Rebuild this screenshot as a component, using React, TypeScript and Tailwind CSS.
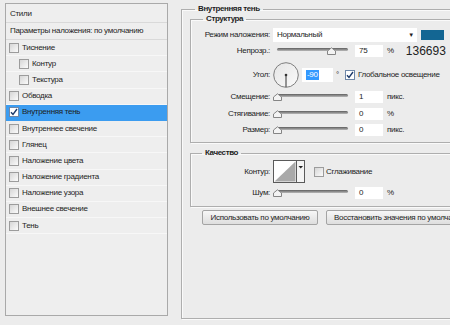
import React from 'react';

const effects = [
  { label: 'Тиснение' },
  { label: 'Контур', indent: true },
  { label: 'Текстура', indent: true },
  { label: 'Обводка' },
  { label: 'Внутренняя тень', checked: true, active: true },
  { label: 'Внутреннее свечение' },
  { label: 'Глянец' },
  { label: 'Наложение цвета' },
  { label: 'Наложение градиента' },
  { label: 'Наложение узора' },
  { label: 'Внешнее свечение' },
  { label: 'Тень' },
];

function Check({ checked }: { checked?: boolean }) {
  return (
    <span
      className={
        'flex h-[10px] w-[10px] shrink-0 items-center justify-center border ' +
        (checked ? 'border-[#6f87a8] bg-white' : 'border-[#9c9c9c] bg-gradient-to-br from-[#d6d6d6] to-[#fbfbfb]')
      }
    >
      {checked && (
        <svg width="8" height="8" viewBox="0 0 8 8">
          <path d="M1 4.2 L3 6.5 L7 1" fill="none" stroke="#1d3a6b" strokeWidth="1.4" />
        </svg>
      )}
    </span>
  );
}

function Slider({ pos }: { pos: number }) {
  return (
    <div className="relative h-[10px] w-[80px] shrink-0">
      <div className="ml-[4px] mt-[2px] h-[3px] w-[71px] rounded-full bg-gradient-to-b from-[#5f5f5f] to-[#b9b9b9]" />
      {/* thumb */}
      <svg className="absolute top-[1px]" style={{ left: pos - 4 }} width="9" height="8" viewBox="0 0 9 8">
        <path d="M0.5 7.5 V4 L4.5 0.8 L8.5 4 V7.5 Z" fill="#f3f3f3" stroke="#858585" />
      </svg>
    </div>
  );
}

function Field({ value }: { value: string }) {
  return (
    <div className="flex h-[12px] w-[28px] shrink-0 items-center bg-white pl-[4px]">
      <span>{value}</span>
    </div>
  );
}

function Row({ label, className, children }: { label: string; className?: string; children: React.ReactNode }) {
  return (
    <div className={'flex items-center ' + (className ?? '')}>
      <span className="w-[79px] shrink-0 text-right">{label}</span>
      <div className="ml-[3px] flex items-center">{children}</div>
    </div>
  );
}

function SliderRow({ label, pos, value, unit, className }: { label: string; pos: number; value: string; unit: string; className?: string }) {
  return (
    <Row label={label} className={'h-[12px] ' + (className ?? '')}>
      <Slider pos={pos} />
      <div className="ml-[2px]">
        <Field value={value} />
      </div>
      <span className="ml-[4px]">{unit}</span>
    </Row>
  );
}

const etched = 'border border-[#aeaeae] shadow-[inset_1px_1px_0_#fafafa,1px_1px_0_#fafafa]';

export default function App() {
  return (
    <div className="flex h-[325px] w-[450px] overflow-hidden bg-[#ececec] pl-[5px] pt-[3px] font-['Liberation_Sans',Arial,sans-serif] text-[8px] leading-none tracking-[-0.3px] whitespace-nowrap text-[#1e1e1e]">
      {/* Styles list */}
      <div className="flex h-[313px] w-[163px] shrink-0 flex-col border border-[#a9a9a9] bg-[#eeeeee]">
        <div className="flex h-[19px] items-center border-b border-[#d9d9d9] pl-[4px] pt-[1px]">Стили</div>
        <div className="flex h-[17px] items-center border-b border-[#d9d9d9] pl-[4px]">Параметры наложения: по умолчанию</div>
        {effects.map((e) => (
          <div
            key={e.label}
            className={
              'flex h-[16.2px] items-center gap-[3px] border-b ' +
              (e.indent ? 'pl-[13px] ' : 'pl-[3px] ') +
              (e.active ? 'border-[#3b9cf0] bg-[#3b9cf0]' : 'border-[#f7f7f7]')
            }
          >
            <Check checked={e.checked} />
            <span>{e.label}</span>
          </div>
        ))}
      </div>

      {/* Inner shadow settings */}
      <fieldset className={'ml-[13px] h-[316px] w-[290px] shrink-0 px-[8px] ' + etched}>
        <legend className="ml-[5px] px-[3px] font-bold leading-[12px] tracking-[-0.4px]">Внутренняя тень</legend>

        <fieldset className={'-mt-[1px] w-[280px] pb-[6px] ' + etched}>
          <legend className="ml-[12px] px-[3px] font-bold leading-[10px] tracking-[-0.4px]">Структура</legend>

          <Row label="Режим наложения:" className="mt-[4px] h-[14px]">
            <div className="flex h-[14px] w-[144px] items-center justify-between bg-white pl-[4px] pr-[3px]">
              <span>Нормальный</span>
              <span className="text-[6px]">▼</span>
            </div>
            <div className="ml-[4px] h-[10px] w-[23px] bg-[#136693]" />
          </Row>

          <Row label="Непрозр.:" className="mt-[3px] h-[12px]">
            <Slider pos={57.5} />
            <div className="ml-[2px]">
              <Field value="75" />
            </div>
            <span className="ml-[4px]">%</span>
            <span className="ml-[12px] text-[12px] leading-none tracking-normal text-[#222]">136693</span>
          </Row>

          <Row label="Угол:" className="mt-[5px] h-[26px]">
            <svg width="26" height="26" viewBox="0 0 26 26">
              <defs>
                <linearGradient id="dial" x1="0" y1="0" x2="1" y2="1">
                  <stop offset="0" stopColor="#e4e4e4" />
                  <stop offset="1" stopColor="#fbfbfb" />
                </linearGradient>
              </defs>
              <circle cx="13" cy="13" r="12.3" fill="url(#dial)" stroke="#7e7e7e" />
              <line x1="13" y1="13" x2="13" y2="25" stroke="#333" strokeWidth="1" />
              <circle cx="13" cy="13" r="1.3" fill="#333" />
            </svg>
            <div className="ml-[3px] flex h-[14px] w-[31px] items-center bg-white pl-[4px]">
              <span className="bg-[#3399ff] px-[1px] py-[1px] text-white">-90</span>
            </div>
            <span className="ml-[3px]">°</span>
            <div className="ml-[6px]">
              <Check checked />
            </div>
            <span className="ml-[3px]">Глобальное освещение</span>
          </Row>

          <SliderRow label="Смещение:" pos={4} value="1" unit="пикс." className="mt-[3px]" />
          <SliderRow label="Стягивание:" pos={4} value="0" unit="%" className="mt-[5px]" />
          <SliderRow label="Размер:" pos={4} value="0" unit="пикс." className="mt-[4px]" />
        </fieldset>

        <fieldset className={'mt-[5px] w-[280px] pb-[7px] ' + etched}>
          <legend className="ml-[11px] px-[3px] font-bold leading-[10px] tracking-[-0.4px]">Качество</legend>

          <Row label="Контур:" className="mt-[2px] h-[23px]">
            <svg width="32" height="23" viewBox="0 0 32 23">
              <rect x="0.5" y="0.5" width="31" height="22" fill="#f4f4f4" stroke="#5a5a5a" />
              <rect x="1" y="1" width="22" height="21" fill="#ffffff" />
              <path d="M1.5 21.5 L22.5 1.5 V21.5 Z" fill="#a9a9a9" />
              <line x1="23.5" y1="1" x2="23.5" y2="22" stroke="#5a5a5a" />
              <path d="M25.5 6 H30 L27.75 8.5 Z" fill="#222" />
            </svg>
            <div className="ml-[9px]">
              <Check />
            </div>
            <span className="ml-[2px]">Сглаживание</span>
          </Row>

          <SliderRow label="Шум:" pos={4} value="0" unit="%" className="mt-[4px]" />
        </fieldset>

        <div className="mt-[3px] flex gap-[8px] pl-[12px]">
          <button className="flex h-[15px] w-[116px] shrink-0 items-center justify-center rounded-[2px] border border-[#a4a4a4] bg-gradient-to-b from-[#f7f7f7] to-[#dedede] whitespace-nowrap">
            Использовать по умолчанию
          </button>
          <button className="flex h-[15px] w-[150px] shrink-0 items-center justify-start rounded-[2px] border border-[#a4a4a4] bg-gradient-to-b from-[#f7f7f7] to-[#dedede] pl-[7px] whitespace-nowrap">
            Восстановить значения по умолчанию
          </button>
        </div>
      </fieldset>
    </div>
  );
}
